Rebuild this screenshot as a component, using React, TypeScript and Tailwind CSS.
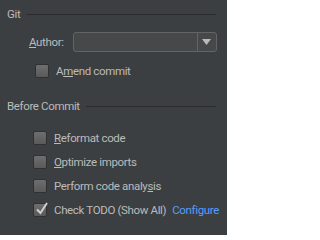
import type { ReactNode } from 'react';

function Section({ title, children }: { title: string; children: ReactNode }) {
  return (
    <div>
      <div className="flex items-center h-[14px]">
        <span className="shrink-0">{title}</span>
        <div className="ml-[6px] mr-[11px] h-px flex-1 bg-[#2b2b2b]" />
      </div>
      {children}
    </div>
  );
}

function Check({ checked = false }: { checked?: boolean }) {
  return (
    <span className="relative w-[14px] h-[14px] shrink-0 rounded-[2px] border border-[#2f3133] bg-gradient-to-b from-[#6e6e6e] to-[#5a5a5a]">
      {checked && (
        <svg className="absolute left-[1px] top-[-3px]" width="14" height="15" viewBox="0 0 14 15">
          <path d="M2 8.5 L5.5 12 L12 2" fill="none" stroke="#d0d0d0" strokeWidth="2" />
        </svg>
      )}
    </span>
  );
}

function Row({ label, checked, extra }: { label: ReactNode; checked?: boolean; extra?: ReactNode }) {
  return (
    <div className="flex items-center h-[24px] pl-[26px]">
      <Check checked={checked} />
      <span className="ml-[7px] whitespace-nowrap">{label}</span>
      {extra}
    </div>
  );
}

export default function App() {
  return (
    <div
      className="w-[227px] h-[235px] bg-[#3c3f41] text-[#bbbbbb] text-[11.5px] leading-[14px] tracking-[-0.35px] pl-[7px] pt-[7px] overflow-hidden"
      style={{ fontFamily: 'Roboto, "Liberation Sans", sans-serif' }}
    >
      <Section title="Git">
        <div className="flex items-center mt-[11px] pl-[22px] h-[20px]">
          <span>
            <u>A</u>uthor:
          </span>
          <div className="ml-[9px] flex h-[20px] w-[144px] rounded-[3px] border border-[#646464] bg-[#45494a]">
            <div className="flex-1" />
            <div className="w-[19px] border-l border-[#646464] flex items-center justify-center">
              <svg width="9" height="6" viewBox="0 0 9 6">
                <path d="M0 0 H9 L4.5 6 Z" fill="#bbbbbb" />
              </svg>
            </div>
          </div>
        </div>
        <div className="mt-[7px] pl-[2px]">
          <Row label={<>A<u>m</u>end commit</>} />
        </div>
      </Section>
      <div className="mt-[16px]">
        <Section title="Before Commit">
          <div className="mt-[13px]">
            <Row label={<><u>R</u>eformat code</>} />
            <Row label={<><u>O</u>ptimize imports</>} />
            <Row label={<>Perform code analy<u>s</u>is</>} />
            <Row
              checked
              label="Check TODO (Show All)"
              extra={<span className="ml-[6px] text-[#589df6]">Configure</span>}
            />
          </div>
        </Section>
      </div>
    </div>
  );
}
